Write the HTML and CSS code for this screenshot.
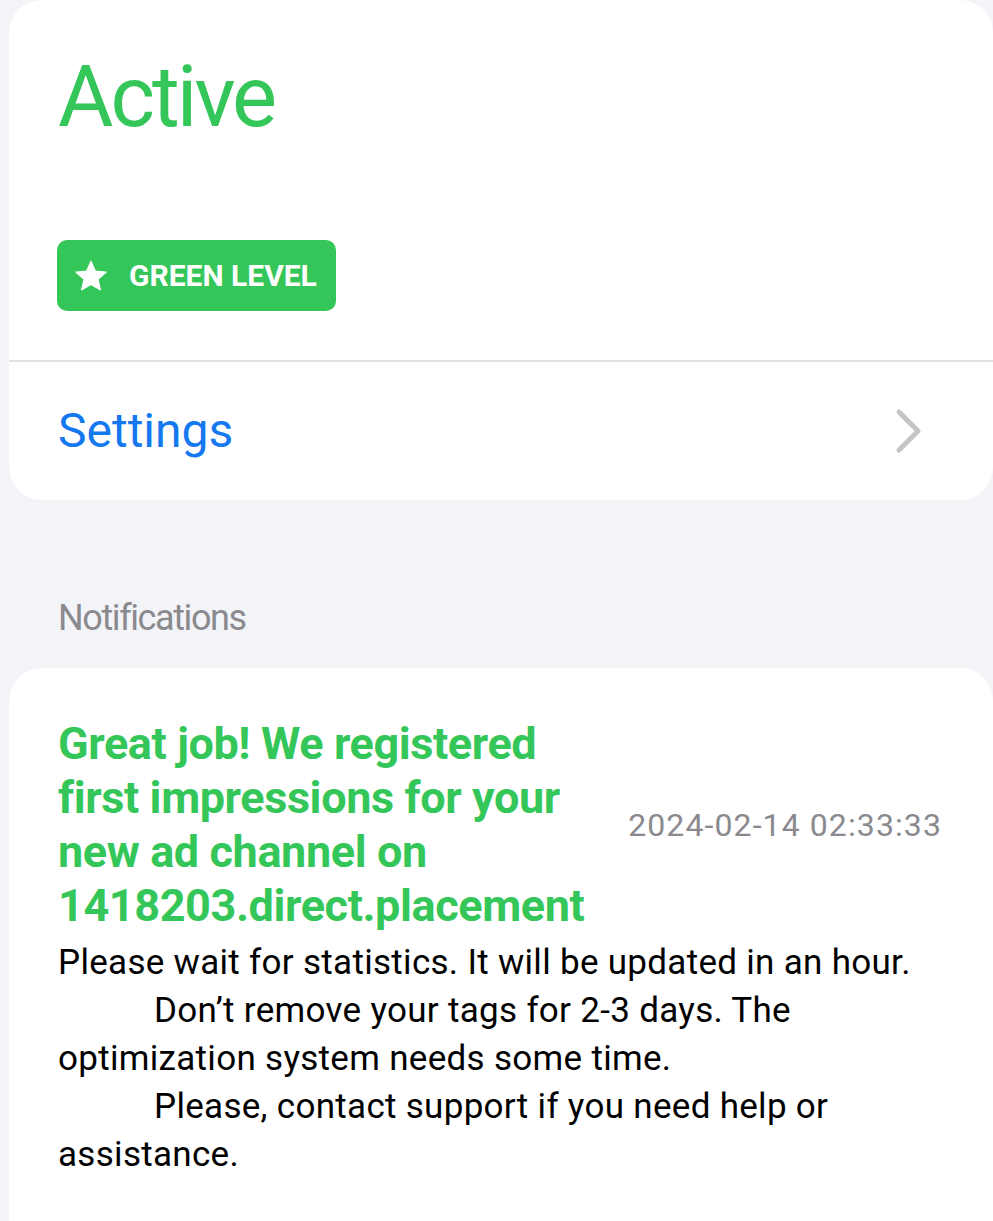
FILE: index.html
```html
<!DOCTYPE html>
<html lang="en">
<head>
<meta charset="utf-8">
<title>Status</title>
<link rel="stylesheet" href="styles.css">
</head>
<body>
<main class="page">
  <section class="card status-card">
    <div class="status-top">
      <h1 class="status-title">Active</h1>
      <div class="badge">
        <svg class="badge-star" viewBox="0 0 24 24" width="34" height="34" aria-hidden="true">
          <path d="M12 1.8l3.05 6.9 7.45.7-5.65 4.95 1.7 7.35L12 17.850 5.45 21.7l1.7-7.35L1.5 9.4l7.45-.7z" fill="#fff" stroke="#fff" stroke-width="1" stroke-linejoin="round"/>
        </svg>
        <span class="badge-text">GREEN LEVEL</span>
      </div>
    </div>
    <div class="divider"></div>
    <div class="settings-row">
      <span class="settings-label">Settings</span>
      <svg class="chevron" viewBox="0 0 30 46" width="30" height="46" aria-hidden="true">
        <path d="M5 4 L24 23 L5 42" fill="none" stroke="#c4c4c7" stroke-width="5" stroke-linecap="round" stroke-linejoin="round"/>
      </svg>
    </div>
  </section>

  <h2 class="section-label">Notifications</h2>

  <section class="card notice-card">
    <div class="notice-head">
      <div class="notice-title">Great job! We registered first impressions for your new ad channel on 1418203.direct.placement</div>
      <div class="notice-date">2024-02-14 02:33:33</div>
    </div>
    <div class="notice-body">
      <p class="notice-para">Please wait for statistics. It will be updated in an hour.</p>
      <p class="notice-para indent">Don’t remove your tags for 2-3 days. The optimization system needs some time.</p>
      <p class="notice-para indent">Please, contact support if you need help or assistance.</p>
    </div>
  </section>
</main>
</body>
</html>
```

FILE: styles.css
```css
* {
  box-sizing: border-box;
}

html, body {
  margin: 0;
  padding: 0;
}

body {
  background: #f3f4f8;
  font-family: Roboto, "Noto Sans", sans-serif;
  color: #000;
}

.page {
  padding-left: 9px;
  display: flex;
  flex-direction: column;
}

.card {
  background: #ffffff;
  border-radius: 33px;
  width: 984px;
}

.status-top {
  padding: 55px 49px 49px 48px;
  display: flex;
  flex-direction: column;
  align-items: flex-start;
}

.status-title {
  margin: 0;
  font-size: 85px;
  line-height: 84px;
  font-weight: 400;
  letter-spacing: -3px;
  color: #35c65a;
  padding-left: 1px;
}

.badge {
  margin-top: 101px;
  height: 71px;
  width: 279px;
  border-radius: 10px;
  background: #35c65a;
  display: flex;
  align-items: center;
  padding-left: 17px;
  gap: 21px;
}

.badge-star {
  display: block;
  flex: none;
}

.badge-text {
  color: #ffffff;
  font-weight: 700;
  font-size: 30px;
  line-height: 1;
  letter-spacing: 0;
}

.divider {
  height: 2px;
  background: #e2e2e4;
}

.settings-row {
  height: 138px;
  display: flex;
  align-items: center;
  justify-content: space-between;
  padding: 0 69px 0 49px;
}

.settings-label {
  color: #1479ef;
  font-size: 48px;
  line-height: 1;
  letter-spacing: 0;
}

.chevron {
  display: block;
}

.section-label {
  margin: 100px 0 32px 49px;
  font-size: 36px;
  line-height: 36px;
  font-weight: 400;
  color: #8a8a8e;
  letter-spacing: -1.4px;
}

.notice-card {
  padding: 49px 51px 42px 49px;
  border-radius: 33px 33px 0 0;
}

.notice-head {
  display: flex;
  align-items: center;
  justify-content: space-between;
}

.notice-title {
  width: 552px;
  color: #35c65a;
  font-weight: 700;
  font-size: 45px;
  line-height: 54px;
  letter-spacing: -0.4px;
}

.notice-date {
  color: #8a8a8e;
  font-size: 32px;
  line-height: 1;
  letter-spacing: 1.1px;
  white-space: nowrap;
}

.notice-body {
  margin-top: 6px;
}

.notice-para {
  margin: 0;
  font-size: 35px;
  line-height: 48px;
  letter-spacing: 0.3px;
  color: #000;
}

.notice-para.indent {
  text-indent: 96px;
}
```
